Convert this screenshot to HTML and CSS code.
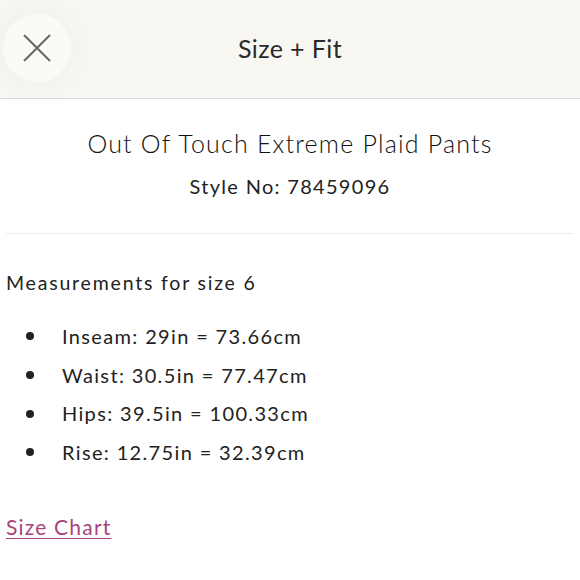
FILE: index.html
```html
<!DOCTYPE html>
<html>
<head>
<meta charset="utf-8">
<link rel="stylesheet" href="styles.css">
</head>
<body>
<header class="topbar">
  <button class="close" aria-label="Close">
    <svg width="28" height="28" viewBox="0 0 28 28"><path d="M1 1L27 27M27 1L1 27" stroke="#666" stroke-width="2" fill="none"/></svg>
  </button>
  <h1 class="heading">Size + Fit</h1>
</header>
<main class="content">
  <section class="product">
    <h2 class="name">Out Of Touch Extreme Plaid Pants</h2>
    <p class="style">Style No: 78459096</p>
  </section>
  <hr class="divider">
  <p class="measure">Measurements for size 6</p>
  <ul class="list">
    <li>Inseam: 29in = 73.66cm</li>
    <li>Waist: 30.5in = 77.47cm</li>
    <li>Hips: 39.5in = 100.33cm</li>
    <li>Rise: 12.75in = 32.39cm</li>
  </ul>
  <a class="chart" href="#">Size Chart</a>
</main>
</body>
</html>
```
FILE: styles.css
```css
* { box-sizing: border-box; }
html, body { margin: 0; padding: 0; background: #fff; }
body { font-family: Lato, "Open Sans", sans-serif; color: #222; }
.topbar {
  height: 99px;
  background: #f9f7f2;
  border-bottom: 1px solid #dcdad6;
  display: flex;
  align-items: center;
  justify-content: center;
  position: relative;
}
.close {
  position: absolute;
  left: 3px;
  top: 14px;
  width: 68px;
  height: 68px;
  border-radius: 50%;
  border: none;
  background: #fcfaf6;
  box-shadow: 0 0 40px rgba(0,0,0,0.05);
  display: flex;
  align-items: center;
  justify-content: center;
  padding: 0;
}
.heading {
  margin: 0 0 2px 0;
  font-weight: 400;
  font-size: 25px;
  letter-spacing: 0.4px;
  color: #2a2a2a;
}
.content { padding: 0 6px; }
.product { text-align: center; padding-top: 27px; }
.name { margin: 0; font-weight: 300; font-size: 25px; line-height: 34px; letter-spacing: 1.2px; color: #111; }
.style { margin: 12px 0 0; font-size: 20px; line-height: 28px; letter-spacing: 1.3px; }
.divider { border: none; border-top: 1px solid #ececec; margin: 33px 0 0; }
.measure { margin: 35px 0 0; font-size: 19.5px; line-height: 28px; letter-spacing: 1.8px; }
.list { margin: 20px 0 0; padding: 0; list-style: none; font-size: 20px; line-height: 38.7px; letter-spacing: 1.35px; }
.list li { display: flex; align-items: center; }
.list li::before {
  content: "";
  width: 8px;
  height: 8px;
  border-radius: 50%;
  background: #222;
  margin: 0 28px 0 20px;
  flex: none;
}
.chart { display: inline-block; margin-top: 42px; font-size: 21px; letter-spacing: 1.2px; color: #a8437a; text-decoration: underline; text-underline-offset: 3px; }
```
